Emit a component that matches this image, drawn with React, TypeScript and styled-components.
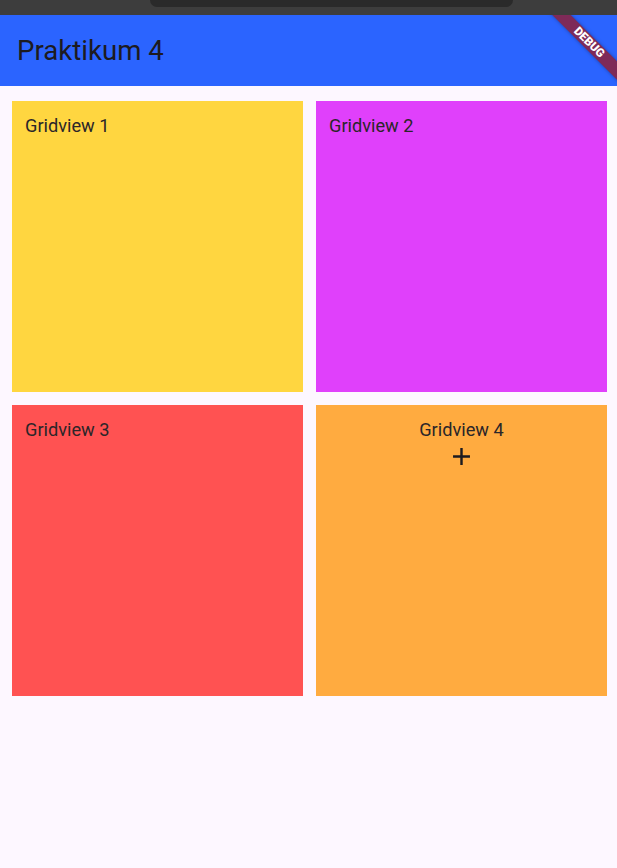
import React from "react";
import styled, { createGlobalStyle } from "styled-components";

const Global = createGlobalStyle`
  html, body { margin: 0; padding: 0; background: #fdf7ff; }
  body { font-family: Roboto, "Noto Sans", sans-serif; }
`;

const Screen = styled.div`
  width: 617px;
  height: 868px;
  background: #fdf7ff;
  display: flex;
  flex-direction: column;
  overflow: hidden;
`;

const StatusBar = styled.div`
  height: 15px;
  background: #3d3d3d;
  display: flex;
  justify-content: center;
`;

const Notch = styled.div`
  width: 363px;
  height: 7px;
  margin-left: 46px;
  background: #2a2a2a;
  border-radius: 0 0 9px 9px;
`;

const AppBar = styled.header`
  position: relative;
  height: 71px;
  background: #2b64ff;
  display: flex;
  align-items: center;
  padding-left: 17px;
  padding-bottom: 0;
  box-sizing: border-box;
  overflow: hidden;
`;

const Title = styled.h1`
  margin: 0;
  font-family: Roboto, sans-serif;
  font-weight: 400;
  font-size: 27.6px;
  line-height: 32px;
  color: #1d1b20;
`;

const Banner = styled.div`
  position: absolute;
  top: 21px;
  right: -33px;
  width: 122px;
  height: 13px;
  background: #7e2a58;
  box-shadow: 0 0 4px rgba(0, 0, 0, 0.35);
  transform: rotate(45deg);
  display: flex;
  align-items: center;
  justify-content: center;
  color: #fff;
  font-family: Roboto, sans-serif;
  font-weight: 900;
  font-size: 11.8px;
  line-height: 1;
`;

const Grid = styled.main`
  display: grid;
  grid-template-columns: 291px 291px;
  gap: 13px;
  padding: 15px 10px 0 12px;
`;

const Tile = styled.div<{ $bg: string; $center?: boolean }>`
  height: 291px;
  background: ${(p) => p.$bg};
  box-sizing: border-box;
  padding: 14px 13px;
  display: flex;
  flex-direction: column;
  align-items: ${(p) => (p.$center ? "center" : "flex-start")};
`;

const Label = styled.span`
  font-family: Roboto, sans-serif;
  font-size: 18.2px;
  line-height: 22px;
  color: #2b2629;
`;

const PlusIcon = styled.svg`
  width: 29px;
  height: 29px;
  margin-top: 1px;
  fill: #1d1b20;
`;

const tiles = [
  { label: "Gridview 1", bg: "#ffd640" },
  { label: "Gridview 2", bg: "#e040fb" },
  { label: "Gridview 3", bg: "#ff5252" },
  { label: "Gridview 4", bg: "#ffab40", center: true, icon: true },
];

export default function App() {
  return (
    <Screen>
      <Global />
      <StatusBar>
        <Notch />
      </StatusBar>
      <AppBar>
        <Title>Praktikum 4</Title>
        <Banner>DEBUG</Banner>
      </AppBar>
      <Grid>
        {tiles.map((t) => (
          <Tile key={t.label} $bg={t.bg} $center={t.center}>
            <Label>{t.label}</Label>
            {t.icon && (
              <PlusIcon viewBox="0 0 24 24">
                <path d="M19 13h-6v6h-2v-6H5v-2h6V5h2v6h6v2z" />
              </PlusIcon>
            )}
          </Tile>
        ))}
      </Grid>
    </Screen>
  );
}
